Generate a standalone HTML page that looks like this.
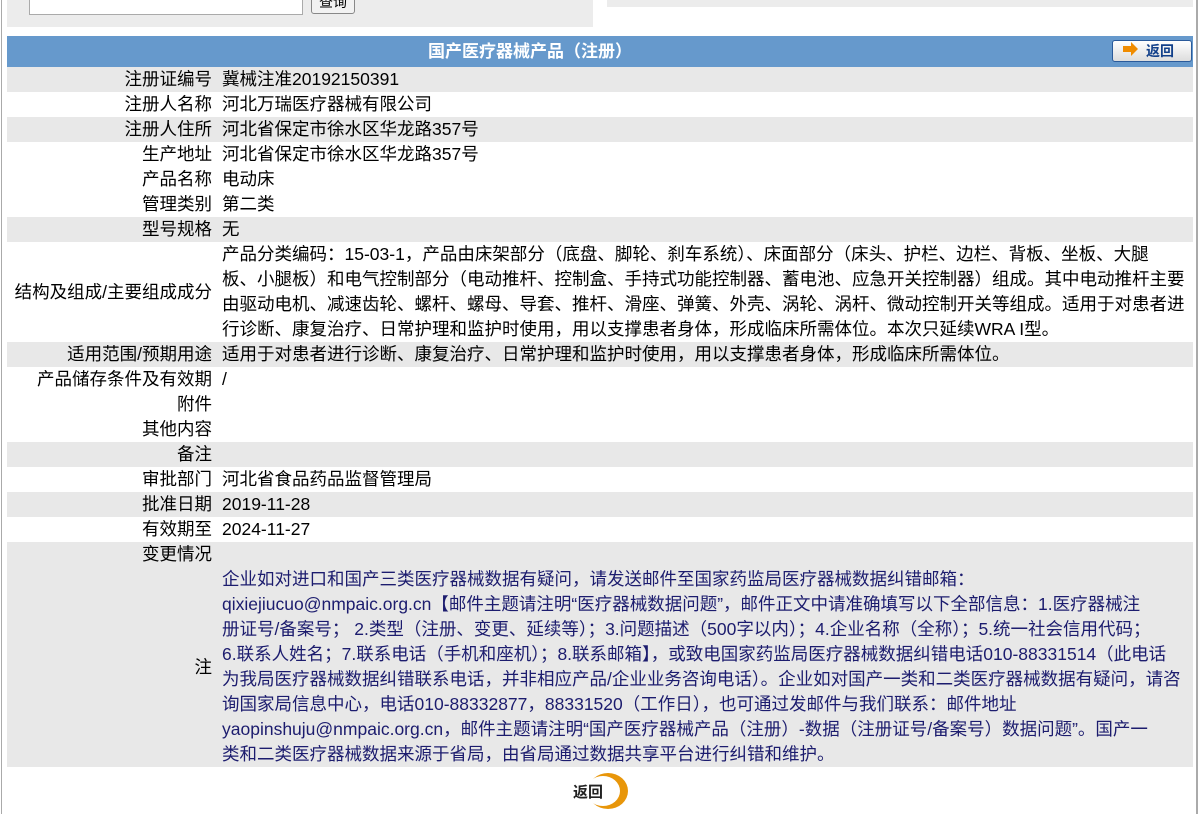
<!DOCTYPE html>
<html><head><meta charset="utf-8"><style>
body{margin:0;width:1200px;height:814px;overflow:hidden;background:#fff;font-family:"Liberation Sans","Noto Sans CJK SC",sans-serif;font-size:17.5px;color:#000;position:relative}
.lb{position:absolute;left:1px;top:0;width:1px;height:814px;background:#aaa}
.rb{position:absolute;left:1196px;top:0;width:2px;height:814px;background:#aaa}
.tp{position:absolute;left:7px;top:0;width:586px;height:27px;background:#ececec}
.tp2{position:absolute;left:607px;top:0;width:586px;height:7px;background:#ececec}
.inp{position:absolute;left:22px;top:-2px;width:272px;height:15px;background:#fff;border:1px solid #aaa}
.qb{position:absolute;left:304px;top:-8px;width:42px;height:20px;background:#f2f2f2;border:1px solid #888;border-radius:3px;font-size:14px;text-align:center;line-height:18px}
.hd{position:absolute;left:7px;top:36px;width:1186px;height:31px;background:#6699cc;color:#fff;font-weight:bold;line-height:31px;font-size:17px}
.hd .t{position:absolute;left:413px;width:220px;text-align:center}
.bk{position:absolute;left:1105px;top:4px;width:78px;height:20px;border:1px solid #2a5a9a;border-radius:3px;background:linear-gradient(#fff,#ddd);color:#12408a;font-size:14px;line-height:20px}
.bk .a{position:absolute;left:10px;top:5px;width:8px;height:6px;background:#f08c00}
.bk .a:after{content:"";position:absolute;left:8px;top:-4px;border-left:7px solid #f08c00;border-top:7px solid transparent;border-bottom:7px solid transparent}
.bk .w{position:absolute;left:33px;top:0}
table{position:absolute;left:7px;top:67px;width:1186px;border-collapse:collapse}
td{padding:0;height:25px;line-height:25px;vertical-align:middle;white-space:nowrap}
td.l{width:205px;text-align:right;padding-right:10px}
tr.g{background:#e8e8e8}
.n{color:#1c1c6e}
.rt{position:absolute;left:572px;top:773px;width:60px;height:36px}
.rt .c{position:absolute;left:16px;top:0;width:40px;height:36px;border-radius:50%;background:#e8960a}
.rt .c2{position:absolute;left:14px;top:3px;width:34px;height:30px;border-radius:50%;background:#fff}
.rt .w{position:absolute;left:1px;top:8px;font-weight:bold;font-size:15px;color:#222}
</style></head><body>
<div class="lb"></div><div class="rb"></div>
<div class="tp"><div class="inp"></div><div class="qb">查询</div></div>
<div class="tp2"></div>
<div class="hd"><div class="t">国产医疗器械产品（注册）</div><div class="bk"><div class="a"></div><span class="w">返回</span></div></div>
<table>
<tr class="g"><td class="l">注册证编号</td><td class="v">冀械注准20192150391</td></tr>
<tr><td class="l">注册人名称</td><td class="v">河北万瑞医疗器械有限公司</td></tr>
<tr class="g"><td class="l">注册人住所</td><td class="v">河北省保定市徐水区华龙路357号</td></tr>
<tr><td class="l">生产地址</td><td class="v">河北省保定市徐水区华龙路357号</td></tr>
<tr><td class="l">产品名称</td><td class="v">电动床</td></tr>
<tr><td class="l">管理类别</td><td class="v">第二类</td></tr>
<tr class="g"><td class="l">型号规格</td><td class="v">无</td></tr>
<tr><td class="l">结构及组成/主要组成成分</td><td class="v">产品分类编码：15-03-1，产品由床架部分（底盘、脚轮、刹车系统）、床面部分（床头、护栏、边栏、背板、坐板、大腿<br>板、小腿板）和电气控制部分（电动推杆、控制盒、手持式功能控制器、蓄电池、应急开关控制器）组成。其中电动推杆主要<br>由驱动电机、减速齿轮、螺杆、螺母、导套、推杆、滑座、弹簧、外壳、涡轮、涡杆、微动控制开关等组成。适用于对患者进<br>行诊断、康复治疗、日常护理和监护时使用，用以支撑患者身体，形成临床所需体位。本次只延续WRA I型。</td></tr>
<tr class="g"><td class="l">适用范围/预期用途</td><td class="v">适用于对患者进行诊断、康复治疗、日常护理和监护时使用，用以支撑患者身体，形成临床所需体位。</td></tr>
<tr><td class="l">产品储存条件及有效期</td><td class="v">/</td></tr>
<tr><td class="l">附件</td><td class="v"></td></tr>
<tr><td class="l">其他内容</td><td class="v"></td></tr>
<tr class="g"><td class="l">备注</td><td class="v"></td></tr>
<tr><td class="l">审批部门</td><td class="v">河北省食品药品监督管理局</td></tr>
<tr class="g"><td class="l">批准日期</td><td class="v">2019-11-28</td></tr>
<tr><td class="l">有效期至</td><td class="v">2024-11-27</td></tr>
<tr class="g"><td class="l">变更情况</td><td class="v"></td></tr>
<tr class="g"><td class="l">注</td><td class="v n">企业如对进口和国产三类医疗器械数据有疑问，请发送邮件至国家药监局医疗器械数据纠错邮箱：<br>qixiejiucuo@nmpaic.org.cn【邮件主题请注明“医疗器械数据问题”，邮件正文中请准确填写以下全部信息：1.医疗器械注<br>册证号/备案号； 2.类型（注册、变更、延续等）；3.问题描述（500字以内）；4.企业名称（全称）；5.统一社会信用代码；<br>6.联系人姓名；7.联系电话（手机和座机）；8.联系邮箱】，或致电国家药监局医疗器械数据纠错电话010-88331514（此电话<br>为我局医疗器械数据纠错联系电话，并非相应产品/企业业务咨询电话）。企业如对国产一类和二类医疗器械数据有疑问，请咨<br>询国家局信息中心，电话010-88332877，88331520（工作日），也可通过发邮件与我们联系：邮件地址<br>yaopinshuju@nmpaic.org.cn，邮件主题请注明“国产医疗器械产品（注册）-数据（注册证号/备案号）数据问题”。国产一<br>类和二类医疗器械数据来源于省局，由省局通过数据共享平台进行纠错和维护。</td></tr>
</table>
<div class="rt"><div class="c"></div><div class="c2"></div><span class="w">返回</span></div>
</body></html>
